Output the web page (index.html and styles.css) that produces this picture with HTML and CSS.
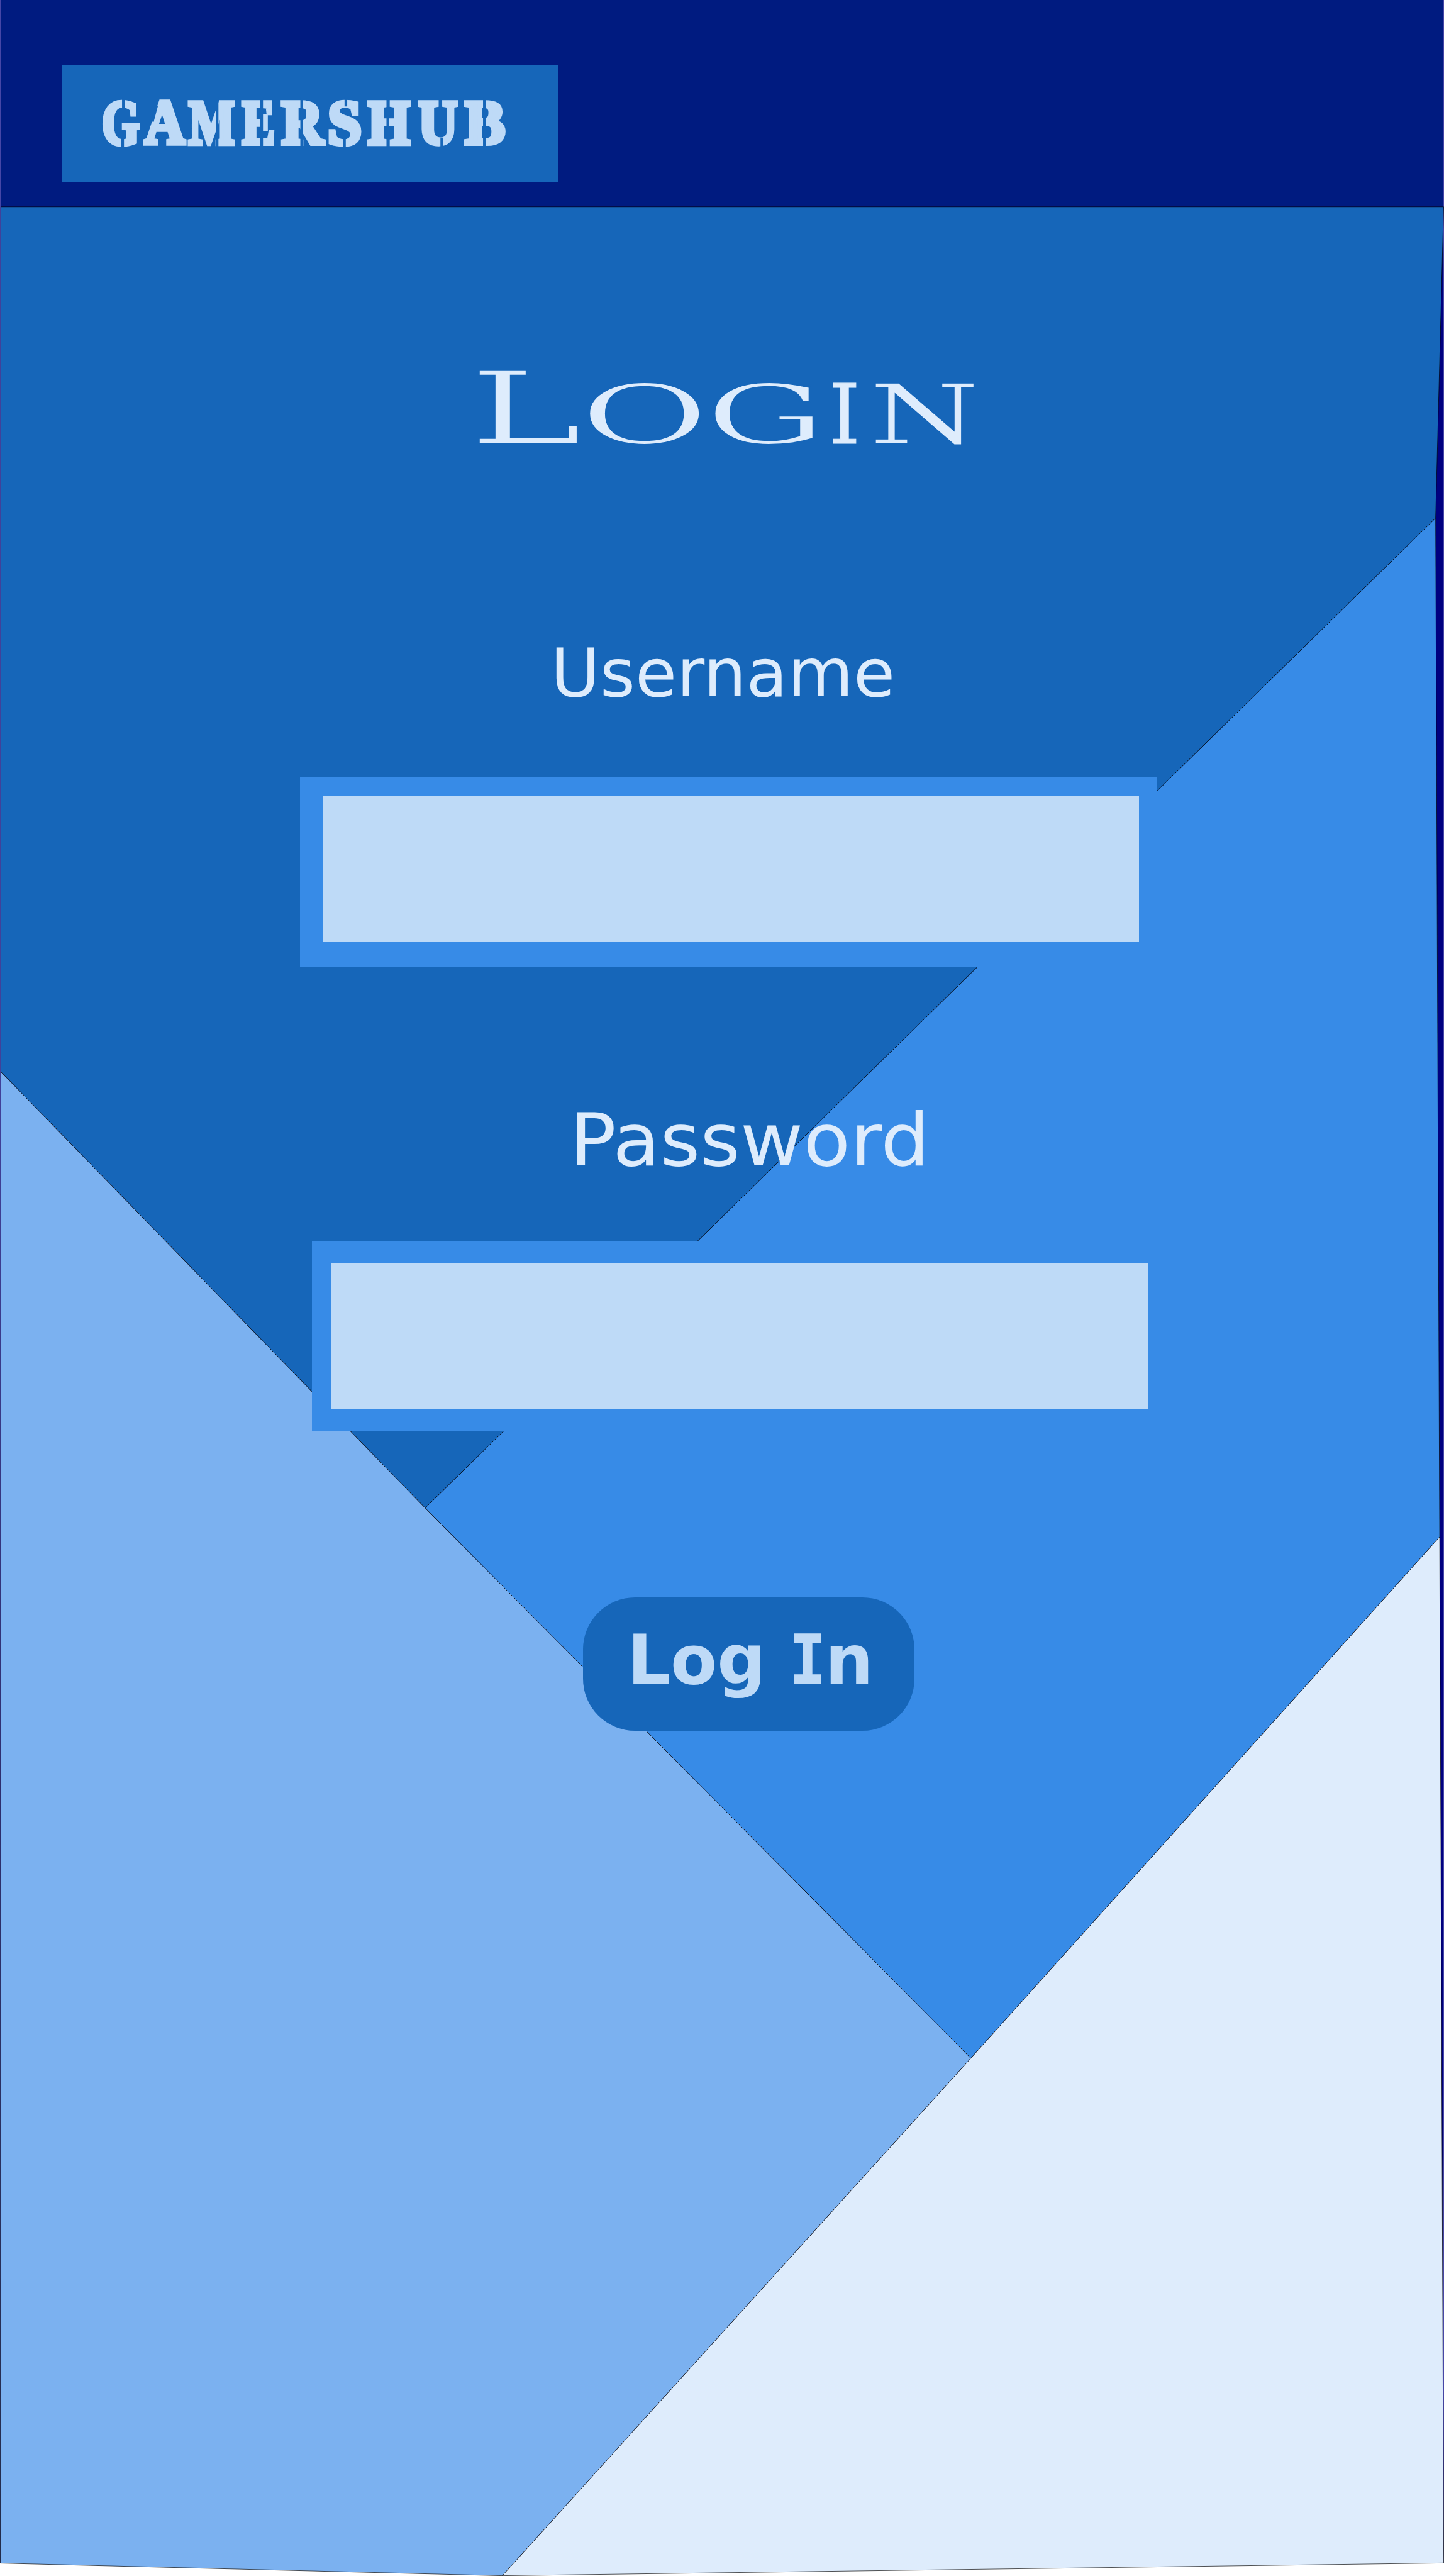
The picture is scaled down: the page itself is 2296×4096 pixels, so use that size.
FILE: index.html
```html
<!DOCTYPE html>
<html lang="en">
<head>
<meta charset="utf-8">
<title>GamersHub Login</title>
<link rel="stylesheet" href="styles.css">
</head>
<body>
<svg class="backdrop" viewBox="0 0 4082 7282" preserveAspectRatio="none" aria-hidden="true">
  <path class="edge" d="M0 0H4082V7245H0Z"/>
  <path class="navy" d="M1 0H4081V7244H1Z"/>
  <g class="facets">
    <path class="deep" d="M2.5 584.5H4081L4058.3 1464.6L1201.8 4263L2.5 3030Z"/>
    <path class="mid" d="M4058.3 1464.6L4069.7 4344.7L2744.3 5818.5L1201.8 4263Z"/>
    <path class="soft" d="M2.5 3030L1201.8 4263L2744.3 5818.5L1420 7281.3L1 7245.7Z"/>
    <path class="pale" d="M4069.7 4344.7L4081.3 7245.3L1420 7281.3L2744.3 5818.5Z"/>
  </g>
</svg>
<header class="topbar">
  <div class="logo">
    <h1 class="wordmark"><span>G</span><span>A</span><span>M</span><span>E</span><span>R</span><span>S</span><span>H</span><span>U</span><span>B</span></h1>
    <svg class="cuts" viewBox="173.5 184 1405 332" aria-hidden="true">
      <path d="M348 276V306M346 392V420M442 300L430 345M613 276V420M739 276V420M852 276V420M977 276V302M973 392V420M1095.500 276V420M1248 390V420M1368.500 276V420"/>
    </svg>
  </div>
</header>
<main class="screen">
  <h2 class="title"><span>L</span><span>O</span><span>G</span><span>I</span><span>N</span></h2>
  <form>
    <label class="label label-user" for="user">Username</label>
    <div class="field field-user"><input id="user" type="text"></div>
    <label class="label label-pass" for="pass">Password</label>
    <div class="field field-pass"><input id="pass" type="password"></div>
    <button class="submit" type="button">Log <span class="slab">I</span>n</button>
  </form>
</main>
</body>
</html>
```
FILE: styles.css
```css
:root {
  --u: calc(100vw / 4082);
  --navy: #001b80;
  --deep: #1666b9;
  --mid: #378be7;
  --soft: #7bb1f0;
  --ice: #bedaf7;
  --pale: #deecfc;
}
* { box-sizing: border-box; margin: 0; padding: 0; }
html, body { width: 100%; height: 100%; overflow: hidden; background: #fff; }
body { position: relative; isolation: isolate; font-family: "DejaVu Sans", sans-serif; }

.backdrop { position: absolute; inset: 0; width: 100%; height: 100%; z-index: -1; }
.edge { fill: #7f7fc4; }
.navy { fill: #000080; }
.facets { stroke: #000; stroke-width: 1.2; stroke-linejoin: round; }
.deep { fill: var(--deep); }
.mid { fill: var(--mid); }
.soft { fill: var(--soft); }
.pale { fill: var(--pale); }

.topbar {
  height: calc(var(--u) * 584);
  margin: 0 calc(var(--u) * 1);
  padding: calc(var(--u) * 184) 0 0 calc(var(--u) * 172.5);
  background: var(--navy);
}
.logo {
  position: relative;
  width: calc(var(--u) * 1405);
  height: calc(var(--u) * 332);
  padding: calc(var(--u) * 73) 0 0 calc(var(--u) * 115);
  background: var(--deep);
}
.wordmark {
  display: flex;
  font: bold calc(var(--u) * 177)/1 "Liberation Serif", serif;
  color: var(--ice);
  -webkit-text-stroke: calc(var(--u) * 13) var(--ice);
}
.wordmark span, .title span { flex: none; width: calc(var(--u) * var(--w)); transform: scaleX(var(--s)); transform-origin: 0 0; }
.wordmark span:nth-child(1) { --w: 119.7; --s: .774; }
.wordmark span:nth-child(2) { --w: 125; --s: .891; }
.wordmark span:nth-child(3) { --w: 151.6; --s: .776; }
.wordmark span:nth-child(4) { --w: 111; --s: .786; }
.wordmark span:nth-child(5) { --w: 131.2; --s: .916; }
.wordmark span:nth-child(6) { --w: 113.8; --s: .976; }
.wordmark span:nth-child(7) { --w: 141.8; --s: .867; }
.wordmark span:nth-child(8) { --w: 131.7; --s: .873; }
.wordmark span:nth-child(9) { --w: 112; --s: .964; }
.cuts { position: absolute; inset: 0; width: 100%; height: 100%; fill: none; stroke: var(--deep); stroke-width: 7.5; }

.screen { padding-top: calc(var(--u) * 431.6); }
.title {
  display: flex;
  align-items: baseline;
  height: calc(var(--u) * 280);
  margin-left: calc(var(--u) * 1326.7);
  font: normal calc(var(--u) * 233)/1 "DejaVu Serif", serif;
  color: var(--pale);
  -webkit-text-stroke: calc(var(--u) * 4) var(--deep);
}
.title span:nth-child(1) { --w: 312.7; --s: 1.69; font-size: calc(var(--u) * 284); }
.title span:nth-child(2) { --w: 355.3; --s: 1.91; }
.title span:nth-child(3) { --w: 348.1; --s: 1.82; }
.title span:nth-child(4) { --w: 113.8; --s: .96; -webkit-text-stroke: calc(var(--u) * 2) var(--pale); }
.title span:nth-child(5) { --w: 300; --s: 1.53; -webkit-text-stroke-width: calc(var(--u) * 2); }

.label { display: block; line-height: 1; color: var(--pale); white-space: nowrap; transform-origin: 0 0; }
.label-user {
  margin: calc(var(--u) * 511) 0 calc(var(--u) * 199) calc(var(--u) * 1556.4);
  height: calc(var(--u) * 191);
  font-size: calc(var(--u) * 191);
}
.label-pass {
  margin: calc(var(--u) * 389.5) 0 calc(var(--u) * 182.2) calc(var(--u) * 1610.9);
  height: calc(var(--u) * 205.8);
  font-size: calc(var(--u) * 205.8);
  transform: scaleX(1.058);
}
.field { display: flex; width: calc(var(--u) * 2422); height: calc(var(--u) * 536.1); background: var(--mid); }
.field input {
  width: calc(var(--u) * 2308);
  height: calc(var(--u) * 411.8);
  border: 0;
  border-radius: 0;
  background: var(--ice);
}
.field-user { margin-left: calc(var(--u) * 848); padding: calc(var(--u) * 55) 0 0 calc(var(--u) * 64.5); }
.field-pass { margin-left: calc(var(--u) * 882); padding: calc(var(--u) * 61) 0 0 calc(var(--u) * 54); }

.submit {
  display: block;
  width: calc(var(--u) * 936.9);
  height: calc(var(--u) * 377.1);
  margin: calc(var(--u) * 469.4) 0 0 calc(var(--u) * 1647.5);
  padding: 0 0 calc(var(--u) * 21.6) calc(var(--u) * 125.6);
  border: 0;
  border-radius: calc(var(--u) * 147);
  background: var(--deep);
  color: var(--ice);
  font: bold calc(var(--u) * 192)/1 "DejaVu Sans", sans-serif;
  text-align: left;
  white-space: pre;
}
.slab {
  display: inline-block;
  width: calc(var(--u) * 100.4);
  font-family: "DejaVu Sans Mono", monospace;
  transform: scaleX(.89);
  transform-origin: 0 0;
  -webkit-text-stroke: calc(var(--u) * 3) var(--ice);
}
```
